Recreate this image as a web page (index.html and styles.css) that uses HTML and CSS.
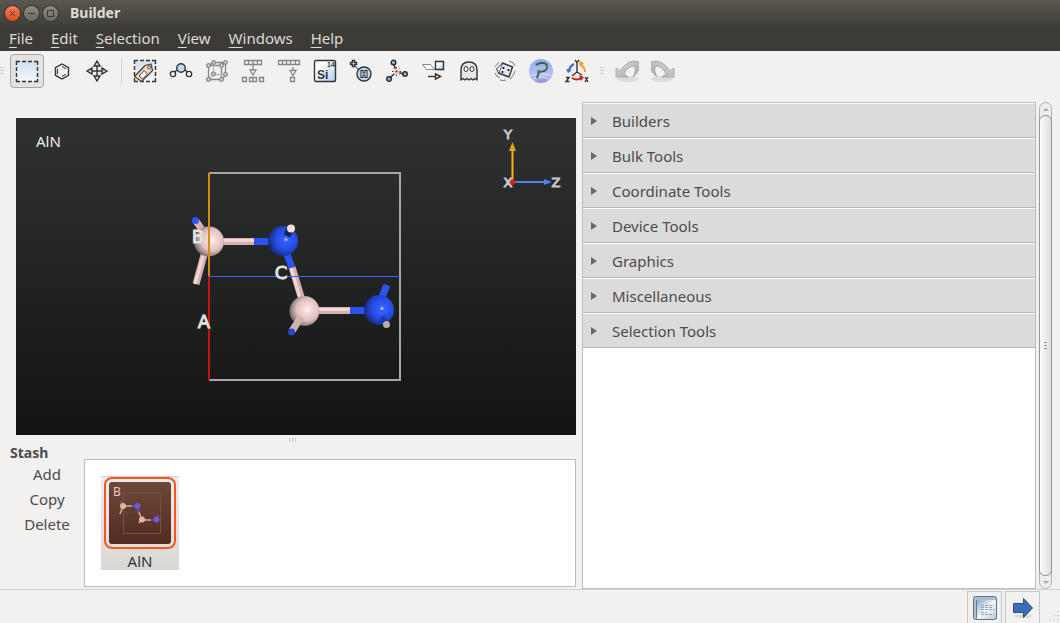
FILE: index.html
```html
<!DOCTYPE html>
<html lang="en">
  <head>
    <meta charset="UTF-8" />
    <meta name="viewport" content="width=device-width, initial-scale=1.0" />
    <title>Builder</title>
    <link rel="stylesheet" href="styles.css">
  </head>
  <body>
    <header class="titlebar">
      <button class="win close" aria-label="Close">
        <svg viewBox="0 0 15 15"><path d="M5 5l5 5M10 5l-5 5" /></svg>
      </button>
      <button class="win" aria-label="Minimize">
        <svg viewBox="0 0 15 15"><path d="M4 7.5h7" /></svg>
      </button>
      <button class="win" aria-label="Maximize">
        <svg viewBox="0 0 15 15"><path d="M4.5 4.5h6v6h-6z" /></svg>
      </button>
      <h1>Builder</h1>
    </header>

    <nav class="menubar">
      <a href="#"><u>F</u>ile</a>
      <a href="#"><u>E</u>dit</a>
      <a href="#"><u>S</u>election</a>
      <a href="#"><u>V</u>iew</a>
      <a href="#"><u>W</u>indows</a>
      <a href="#"><u>H</u>elp</a>
    </nav>

    <div class="toolbar">
      <span class="grip"></span>
      <div class="group modes">
        <button class="tool active" aria-label="Select">
          <svg viewBox="0 0 24 24">
            <defs>
              <linearGradient id="sky" x1="0" y1="0" x2="0" y2="1">
                <stop offset="0" stop-color="#cfe0f2" />
                <stop offset="1" stop-color="#f6f8fb" />
              </linearGradient>
              <linearGradient id="ice" x1="0" y1="0" x2="1" y2="1">
                <stop offset="0.3" stop-color="#ffffff" />
                <stop offset="1" stop-color="#a9cdf0" />
              </linearGradient>
            </defs>
            <path d="M1.5 2.5h21v20h-21z" fill="url(#sky)" />
            <path d="M1 2.5h22M1 22.5h22M1.5 2v21M22.5 2v21" class="ink" stroke-dasharray="4 2" />
          </svg>
        </button>
        <button class="tool" aria-label="Ring">
          <svg viewBox="0 0 24 24">
            <path class="ink" d="M12 5l6.5 3.700v7.600l-6.500 3.700-6.500-3.700v-7.600z" />
            <path class="ink thin" d="M7.500 10v5M12 7.500l4 2.300M12 17.500l4-2.300" />
          </svg>
        </button>
        <button class="tool" aria-label="Move">
          <svg viewBox="0 0 24 24">
            <path class="ink" d="M12 5v14M5 12h14" />
            <path class="ink blue" d="M12 2l3 5H9zM12 22l3-5H9zM2 12l5-3v6zM22 12l-5-3v6z" />
          </svg>
        </button>
      </div>
      <span class="separator"></span>
      <div class="group">
        <button class="tool" aria-label="Tags">
          <svg viewBox="0 0 24 24">
            <path d="M1.500 1.500h21v21h-21z" fill="url(#sky)" />
            <path d="M1 1.500h22M1 22.500h22M1.500 1v22M22.500 1v22" class="ink" stroke-dasharray="4 2" />
            <path d="M1.500 17.500L12 6.500l6-1.500 1.500 6.500L8.500 22.500z" fill="#f3d9c4" stroke="#4a4038" stroke-width="1.200" stroke-linejoin="round" />
            <path d="M6 17l5-5.500 3.500 3.500-5 5z" fill="#fff" stroke="#4a4038" />
            <circle cx="16" cy="8.500" r="1.500" fill="#fff" stroke="#4a4038" />
          </svg>
        </button>
        <button class="tool" aria-label="Bond angle">
          <svg viewBox="0 0 24 24">
            <path class="ink" d="M4 14l7-5M13 9l7 5" />
            <circle class="ink blue" cx="12" cy="9" r="4.200" />
            <circle class="ink pale" cx="4" cy="15" r="2.600" />
            <circle class="ink pale" cx="20" cy="15" r="2.600" />
          </svg>
        </button>
        <button class="tool" aria-label="Supercell">
          <svg viewBox="0 0 24 24" class="muted">
            <path d="M3.500 6.500h13v14h-13zM8.500 3.500h12v13M3.500 6.500l5-3M16.500 6.500l4-3M16.500 20.500l4-4" />
            <path stroke="#bbb" d="M8.500 3.500v12h12M3.500 20.500l5-5" />
            <g fill="#ddd">
              <circle cx="3.500" cy="6.500" r="1.800" /><circle cx="16.500" cy="6.500" r="1.800" />
              <circle cx="3.500" cy="20.500" r="1.800" /><circle cx="16.500" cy="20.500" r="1.800" />
              <circle cx="8.500" cy="3.500" r="1.800" /><circle cx="20.500" cy="3.500" r="1.800" />
              <circle cx="8.500" cy="15" r="1.800" /><circle cx="20.500" cy="15.500" r="1.800" />
            </g>
          </svg>
        </button>
        <button class="tool" aria-label="Split">
          <svg viewBox="0 0 24 24" class="muted">
            <path d="M3.500 1.500h17v4h-17zM7.500 1.500v4M12 1.500v4M16.500 1.500v4M12 5.500v5M1.500 18.500h4v4h-4zM8.500 18.500h7v4h-7zM12 18.500v4M18.500 18.500h4v4h-4z" />
            <path d="M9 11h6l-3 5z" fill="#fff" />
          </svg>
        </button>
        <button class="tool" aria-label="Extract">
          <svg viewBox="0 0 24 24" class="muted">
            <path d="M1.500 1.500h21v4h-21zM5.500 1.500v4M9.500 1.500v4M13.500 1.500v4M18.500 1.500v4M16 8v4M13.500 18.500h4v4h-4z" />
            <path d="M13 11.500h6l-3 5z" fill="#fff" />
          </svg>
        </button>
        <button class="tool" aria-label="Periodic table">
          <svg viewBox="0 0 24 24">
            <rect x="1.500" y="1.500" width="21" height="21" rx="1.500" fill="url(#ice)" stroke="#333" stroke-width="1.400" />
            <text x="4" y="20" class="element">Si</text>
            <text x="14" y="8" class="number">14</text>
          </svg>
        </button>
        <button class="tool" aria-label="Add hydrogen">
          <svg viewBox="0 0 24 24">
            <path d="M6 7l4 4" stroke="#5d84ac" stroke-width="1.500" />
            <path class="ink pale" d="M3.500 1.500h2v2h2v2h-2v2h-2v-2h-2v-2h2z" />
            <circle cx="15" cy="15" r="7" fill="#bcd8f2" stroke="#333" stroke-width="1.400" />
            <path d="M13 11v8M17 11v8M13 15h4" fill="none" stroke="#222" stroke-width="3" />
            <path d="M13 12v6M17 12v6M13 15h4" fill="none" stroke="#fff" />
          </svg>
        </button>
        <button class="tool" aria-label="Place atom">
          <svg viewBox="0 0 24 24">
            <path class="ink" d="M8.500 4.500l3 8M5 19l6.500-6.500 8 3" />
            <path class="ink thin" d="M11.500 8v9M7 12.500h9M8.500 9.500l6 6M8.500 15.500l6-6" />
            <circle cx="11.500" cy="12.500" r="3" fill="#fbeaea" />
            <circle cx="11.500" cy="12.500" r="1.300" fill="#d22" />
            <g fill="#7fb0e2" stroke="#222" stroke-width="1.300">
              <circle cx="8.500" cy="3.500" r="2.300" /><circle cx="4" cy="20" r="2.300" /><circle cx="20" cy="15" r="2.300" />
            </g>
          </svg>
        </button>
        <button class="tool" aria-label="Transform cell">
          <svg viewBox="0 0 24 24">
            <path d="M1.500 5.500h8l4 5h-8z" fill="#fff" stroke="#888" />
            <path d="M14.500 2.500h8v8h-8z" fill="url(#ice)" stroke="#333" stroke-width="1.400" />
            <path class="ink" d="M7 17.500h8" />
            <path class="ink pale" d="M14.500 15l5 2.500-5 2.500z" />
          </svg>
        </button>
        <button class="tool" aria-label="Ghost atoms">
          <svg viewBox="0 0 24 24">
            <path d="M4 21V11c0-5 3-8 8-8s8 3 8 8v10l-2-1.500-2 1.500-2-1.500-2 1.500-2-1.500-2 1.500-2-1.500z" fill="#e6e6e6" stroke="#333" stroke-width="1.400" stroke-linejoin="round" />
            <ellipse class="ink pale thin" cx="9" cy="10" rx="2" ry="2.500" />
            <ellipse class="ink pale thin" cx="15" cy="10" rx="2" ry="2.500" />
          </svg>
        </button>
        <button class="tool" aria-label="Rattle">
          <svg viewBox="0 0 24 24">
            <path d="M9.500 4l10 4-3.500 10-10.500-4z" fill="#dfe8f2" stroke="#333" stroke-width="1.400" stroke-linejoin="round" />
            <path d="M9.500 4l-6 6 2 4" fill="#fff" stroke="#333" stroke-linejoin="round" />
            <path d="M2 8l4-5M2 14q1 4 5 5M7 21q3 1 6 0M16 2q5 1 6 5M22 12q-1 5-5 8" fill="none" stroke="#777" />
            <circle cx="10.500" cy="9" r="1" /><circle cx="15.500" cy="11" r="1" /><circle cx="9.500" cy="13" r="1" />
          </svg>
        </button>
        <button class="tool" aria-label="Plugin">
          <svg viewBox="0 0 24 24">
            <defs>
              <linearGradient id="orb" x1="0" y1="0" x2="0" y2="1">
                <stop offset="0" stop-color="#8fa6f0" /><stop offset="0.650" stop-color="#b4c1f6" /><stop offset="1" stop-color="#8f90e2" />
              </linearGradient>
            </defs>
            <circle cx="12" cy="12" r="12" fill="url(#orb)" />
            <path d="M2 17q10-4 20 0M4 20q8-4 16 0" fill="none" stroke="#e3e5fc" />
            <path d="M7 6c4-3 11-3 11 2 0 4-4 4-8 5l-2 6" fill="none" stroke="#3c5a52" stroke-width="2" />
            <path d="M8 7c4-2 9-2 9 1s-3 3-7 4" fill="none" stroke="#8cbf8a" />
            <circle cx="10" cy="13" r="2" fill="#4c7a62" />
          </svg>
        </button>
        <button class="tool" aria-label="Rotate axes">
          <svg viewBox="0 0 24 24">
            <path class="ink" d="M12 6v7l-5 4M12 13l5 3M10 1l2 2.500L14 1M12 3v3" />
            <path d="M9 5Q5 7 4 11" fill="none" stroke="#3a6be0" stroke-width="2" />
            <path d="M1 10l6 1-4 3z" fill="#3a6be0" />
            <path d="M15 5q5 3 5 8" fill="none" stroke="#f09a10" stroke-width="2" />
            <path d="M14 2l5 2-4 4z" fill="#f09a10" />
            <path d="M7 19q5 3 9 0" fill="none" stroke="#d81818" stroke-width="2" />
            <path d="M14 16l5 2-3 4z" fill="#d81818" />
            <path class="ink" d="M1 18.500h3l-3 4h3.500M20 18l3 5M23 18l-3 5" />
          </svg>
        </button>
      </div>
      <span class="grip"></span>
      <div class="group">
        <button class="tool" aria-label="Undo">
          <svg viewBox="0 0 24 24">
            <defs>
              <linearGradient id="steel" x1="0" y1="0" x2="1" y2="1">
                <stop offset="0" stop-color="#dcdcda" /><stop offset="1" stop-color="#a5a5a3" />
              </linearGradient>
            </defs>
            <ellipse cx="13" cy="20" rx="11" ry="3" fill="#dddcda" />
            <path d="M1 9v9h12l-4-3q4-8 10-8 3 4-1 11 8-6 6-15-10-4-19 9z" fill="url(#steel)" stroke="#aaaaa8" />
          </svg>
        </button>
        <button class="tool" aria-label="Redo">
          <svg viewBox="0 0 24 24" class="mirror">
            <ellipse cx="13" cy="20" rx="11" ry="3" fill="#dddcda" />
            <path d="M1 9v9h12l-4-3q4-8 10-8 3 4-1 11 8-6 6-15-10-4-19 9z" fill="url(#steel)" stroke="#aaaaa8" />
          </svg>
        </button>
      </div>
    </div>

    <main>
      <section class="workspace">
        <div class="viewport">
          <span class="name">AlN</span>
          <svg viewBox="16 118 560 317" role="img" aria-label="AlN crystal structure">
            <defs>
              <radialGradient id="al" cx="0.600" cy="0.450" r="0.600">
                <stop offset="0" stop-color="#ffffff" /><stop offset="0.150" stop-color="#fbdedd" />
                <stop offset="0.600" stop-color="#dfc2c0" /><stop offset="1" stop-color="#7c6867" />
              </radialGradient>
              <radialGradient id="n" cx="0.600" cy="0.450" r="0.600">
                <stop offset="0" stop-color="#dfe6ff" /><stop offset="0.120" stop-color="#3560ff" />
                <stop offset="0.600" stop-color="#254be0" /><stop offset="1" stop-color="#142a80" />
              </radialGradient>
            </defs>
            <path d="M209 173h191v207H209" fill="none" stroke="#a5a8a7" stroke-width="2" />
            <path d="M209 276v104" stroke="#c41414" stroke-width="2" />

            <g class="bonds">
              <path class="al" d="M222 241.500h32M204 255l-8 29M207 237l-11-16M318 310.500h32M292 267l10 33" />
              <path class="n" d="M254 241.500h15M350 310.500h15M287 254l5 14M381 299l6-14" />
              <path class="shine" d="M222 240.500h32M318 309.500h32M203 256l-8 28M291 268l9 30" />
            </g>
            <circle cx="195.500" cy="220.500" r="3.500" fill="#3156f5" />
            <circle cx="209" cy="241.500" r="15" fill="url(#al)" />
            <circle cx="283" cy="241" r="15" fill="url(#n)" />
            <circle cx="304.500" cy="311" r="15" fill="url(#al)" />
            <circle cx="379" cy="310" r="15" fill="url(#n)" />
            <g class="bonds">
              <path d="M287 236l3-7" stroke="#122060" />
              <path class="al" d="M301 317l-9 14" />
              <path d="M381 318l5 5" stroke="#1b3aa8" />
            </g>
            <circle cx="291" cy="228.500" r="4" fill="#fbdedd" />
            <circle cx="291.500" cy="332" r="3.500" fill="#2745c4" />
            <circle cx="386.500" cy="324.500" r="3.500" fill="#c3a9a8" />

            <path d="M209 276.500h191" stroke="#3c66f5" />
            <path d="M209 173v103" stroke="#d68a1c" stroke-width="2" />
            <g class="letters">
              <text x="198" y="243">B</text>
              <text x="281" y="279">C</text>
              <text x="204" y="328">A</text>
            </g>

            <path d="M512.500 182v-33" stroke="#f5b40c" stroke-width="2" />
            <path d="M509 151l3.500-9 3.500 9z" fill="#e5a313" />
            <path d="M513 182h32" stroke="#4a80f0" stroke-width="2" />
            <path d="M544 179l8 3-8 3z" fill="#4a80f0" />
            <circle cx="512" cy="182" r="3" fill="#f01818" />
            <g class="axes">
              <text x="508" y="139">Y</text>
              <text x="508" y="187">X</text>
              <text x="556" y="187">Z</text>
            </g>
          </svg>
        </div>
        <div class="splitter"><i></i><i></i><i></i></div>
        <div class="stash">
          <div class="actions">
            <h2>Stash</h2>
            <button>Add</button>
            <button>Copy</button>
            <button>Delete</button>
          </div>
          <div class="items">
            <figure class="item">
              <div class="thumb">
                <svg viewBox="0 0 62 62">
                  <path d="M14.500 10.500h37v41h-37z" fill="none" stroke="#745144" />
                  <path d="M14 31h38" stroke="#604045" />
                  <path d="M14 24h9M32 38h10M29 28l4 10M14 24l-3 8M32 38l-2 3" stroke="#dca795" stroke-width="1.500" />
                  <path d="M23 24h6M42 38h6M11 19l3 4M48 38l1-5M28 25l2 5" stroke="#5b50b8" stroke-width="1.500" />
                  <circle cx="14" cy="24" r="3" fill="#e8b3a2" /><circle cx="33" cy="37.500" r="3" fill="#e8b3a2" />
                  <circle cx="28.500" cy="24" r="3" fill="#6a5cd0" /><circle cx="47.500" cy="37.500" r="3" fill="#6a5cd0" />
                  <text x="4" y="14">B</text>
                </svg>
              </div>
              <figcaption>AlN</figcaption>
            </figure>
          </div>
        </div>
      </section>

      <aside class="panels">
        <button>Builders</button>
        <button>Bulk Tools</button>
        <button>Coordinate Tools</button>
        <button>Device Tools</button>
        <button>Graphics</button>
        <button>Miscellaneous</button>
        <button>Selection Tools</button>
      </aside>

      <div class="scrollbar">
        <button class="up" aria-label="Scroll up"></button>
        <div class="handle"><i></i><i></i><i></i></div>
        <button class="down" aria-label="Scroll down"></button>
      </div>
    </main>

    <footer class="statusbar">
      <button aria-label="Job manager">
        <svg viewBox="0 0 24 24">
          <defs>
            <linearGradient id="page" x1="0" y1="0" x2="1" y2="1">
              <stop offset="0" stop-color="#8cabc6" /><stop offset="0.500" stop-color="#f4f6f6" /><stop offset="1" stop-color="#b9cbda" />
            </linearGradient>
          </defs>
          <rect x="0.500" y="0.500" width="23" height="23" rx="2" fill="#a9bfd1" stroke="#58748e" />
          <path d="M4 4h19v16l-2 3H4z" fill="url(#page)" />
          <path d="M3.500 4v18" stroke="#5f7d96" />
          <path d="M8 9.500h13M8 11.500h12M8 13.500h14M8 16.500h6M8 18.500h13" stroke="#93a5b1" stroke-dasharray="3 1" />
        </svg>
      </button>
      <button aria-label="Send to">
        <svg viewBox="0 0 24 24">
          <ellipse cx="12" cy="20" rx="9" ry="2" fill="#dcdad7" />
          <path d="M2.500 7.500h10v-5l9 9.500-9 9.500v-5h-10z" fill="#3a6fb4" stroke="#234f8c" stroke-linejoin="round" />
        </svg>
      </button>
      <svg class="resize" viewBox="0 0 12 12"><path d="M11 3v1M8 6v1M11 6v1M5 9v1M8 9v1M11 9v1" /></svg>
    </footer>
  </body>
</html>
```

FILE: styles.css
```css
* {
  box-sizing: border-box;
}
body {
  margin: 0;
  height: 100vh;
  overflow: hidden;
  display: flex;
  flex-direction: column;
  background: #f2f1f0;
  color: #4c4c4c;
  font: 15px/20px "Noto Sans", sans-serif;
}
button {
  margin: 0;
  padding: 0;
  border: 0;
  background: none;
  color: inherit;
  font: inherit;
}
svg {
  display: block;
}

/* window frame */
.titlebar {
  height: 26px;
  padding: 0 5px;
  display: flex;
  align-items: center;
  gap: 4px;
  background: linear-gradient(#59574f, #3f3e39);
  color: #dfdbd2;
}
.titlebar h1 {
  margin: 0 0 0 8px;
  font-size: 14px;
}
.win {
  width: 15px;
  height: 15px;
  border-radius: 50%;
  background: linear-gradient(#8b8980, #6a6860);
  box-shadow: 0 0 0 1px #35342f;
}
.win path {
  fill: none;
  stroke: #3b3a36;
}
.close {
  background: linear-gradient(#f4805d, #df4b1c);
}
.menubar {
  height: 25px;
  padding: 0 9px;
  display: flex;
  gap: 18px;
  line-height: 25px;
  background: #3c3b37;
}
.menubar a {
  color: #dfdbd2;
  text-decoration: none;
}
.menubar u {
  text-underline-offset: 3px;
  text-decoration-thickness: 1px;
}

/* toolbar */
.toolbar {
  height: 40px;
  display: flex;
  align-items: center;
  gap: 6px;
}
.grip {
  width: 4px;
  height: 8px;
  background: repeating-linear-gradient(#d0cecb 0 1px, #f2f1f0 1px 3px);
}
.separator {
  width: 2px;
  height: 26px;
  border-right: 1px solid #d5d3d0;
}
.group {
  display: flex;
  gap: 2px;
}
.modes {
  gap: 1px;
}
.tool {
  width: 34px;
  height: 34px;
  display: grid;
  place-items: center;
}
.active {
  border: 1px solid #a9a7a3;
  border-radius: 4px;
  background: #e4e3e1;
}
.tool svg {
  width: 24px;
  height: 24px;
}
.ink {
  fill: none;
  stroke: #333;
  stroke-width: 1.4;
}
.thin {
  stroke-width: 1;
}
.blue {
  fill: #c3daf2;
}
.pale {
  fill: #fff;
}
.muted {
  fill: none;
  stroke: #858585;
  stroke-width: 1.3;
}
.mirror {
  transform: scaleX(-1);
}
.element {
  font: bold 12px "Liberation Sans", sans-serif;
  fill: #333;
}
.number {
  font: bold 7px "Liberation Sans", sans-serif;
  fill: #333;
}

/* main area */
main {
  flex: 1;
  min-height: 0;
  padding-right: 8px;
  display: grid;
  grid-template-columns: 576fr 457fr 13px;
  column-gap: 3px;
}
.workspace {
  min-height: 0;
  padding-top: 27px;
  display: flex;
  flex-direction: column;
}
.viewport {
  position: relative;
  flex: 1;
  min-height: 0;
  margin-left: 16px;
  background: linear-gradient(#303232, #131313);
}
.viewport svg {
  width: 100%;
  height: 100%;
}
.viewport .name {
  position: absolute;
  top: 13px;
  left: 20px;
  color: #eee;
}
.bonds path {
  stroke-width: 7;
}
.bonds .al {
  stroke: #d0b2b0;
}
.bonds .n {
  stroke: #2c53ee;
}
.bonds .shine {
  stroke: #f3d6d4;
  stroke-width: 3;
}
.letters,
.axes {
  font: 18px "DejaVu Sans", sans-serif;
  fill: #dfe2e1;
  stroke: #dfe2e1;
  text-anchor: middle;
}
.axes {
  font-size: 13px;
  fill: #c6c9c8;
  stroke: #c6c9c8;
}
.splitter {
  height: 10px;
  padding-left: 9px;
  display: flex;
  justify-content: center;
  align-items: center;
  gap: 2px;
}
.splitter i {
  width: 1px;
  height: 4px;
  background: #c8c6c3;
}

/* stash */
.stash {
  height: 144px;
  padding-left: 10px;
  display: flex;
}
.actions {
  width: 74px;
  display: flex;
  flex-direction: column;
}
.actions h2 {
  margin: 0;
  font-size: 14px;
  line-height: 16px;
}
.actions button {
  height: 25px;
}
.items {
  flex: 1;
  margin: 14px 0 2px;
  padding: 16px;
  border: 1px solid #bfbdb9;
  background: #fff;
}
.item {
  width: 78px;
  height: 94px;
  margin: 0;
  display: flex;
  flex-direction: column;
  align-items: center;
  background: linear-gradient(#eeedec, #dad8d5);
  border-top: 1px solid #d5d3d0;
  color: #333;
}
.item figcaption {
  line-height: 24px;
}
.thumb {
  padding: 3px;
  border: 2px solid #fb541c;
  border-radius: 8px;
}
.thumb svg {
  width: 62px;
  height: 62px;
  border-radius: 3px;
  background: linear-gradient(#6d493a, #522b20);
}
.thumb text {
  font: 12px "Noto Sans", sans-serif;
  fill: #f0c8b8;
}

/* tool panels */
.panels {
  margin: 11px 0 0 3px;
  border: 1px solid #bfbdb9;
  background: #fff;
}
.panels button {
  width: 100%;
  height: 35px;
  padding-left: 8px;
  display: flex;
  align-items: center;
  gap: 15px;
  border-top: 1px solid #fff;
  border-bottom: 1px solid #b9b7b5;
  background: #dbdbdb;
}
.panels button::before {
  content: "";
  border-left: 6px solid #686868;
  border-top: 4px solid transparent;
  border-bottom: 4px solid transparent;
}
.scrollbar {
  margin-top: 11px;
  display: flex;
  flex-direction: column;
  border: 1px solid #b5b3b0;
  border-radius: 7px;
  background: #eeedec;
}
.scrollbar button {
  height: 12px;
  display: grid;
  place-items: center;
}
.scrollbar button::before {
  content: "";
  border: 3px solid transparent;
}
.scrollbar .up::before {
  border-top: 0;
  border-bottom-color: #aaa;
}
.scrollbar .down::before {
  border-bottom: 0;
  border-top-color: #aaa;
}
.handle {
  flex: 1;
  margin: 0 -1px;
  display: flex;
  flex-direction: column;
  justify-content: center;
  align-items: center;
  gap: 2px;
  border: 1px solid #969492;
  border-radius: 6px;
  background: linear-gradient(to right, #fcfcfc, #dedddb);
}
.handle i {
  width: 3px;
  height: 1px;
  background: #999;
}

.statusbar {
  height: 34px;
  padding: 1px 1px 0;
  display: flex;
  justify-content: flex-end;
  gap: 3px;
  border-top: 1px solid #d3d1ce;
}
.statusbar button {
  width: 35px;
  display: grid;
  place-items: center;
  border: 1px solid #c9c7c4;
  border-bottom: 0;
}
.statusbar button svg {
  width: 24px;
  height: 24px;
}
.resize {
  width: 16px;
  align-self: flex-end;
  stroke: #c5c3c0;
}
```
